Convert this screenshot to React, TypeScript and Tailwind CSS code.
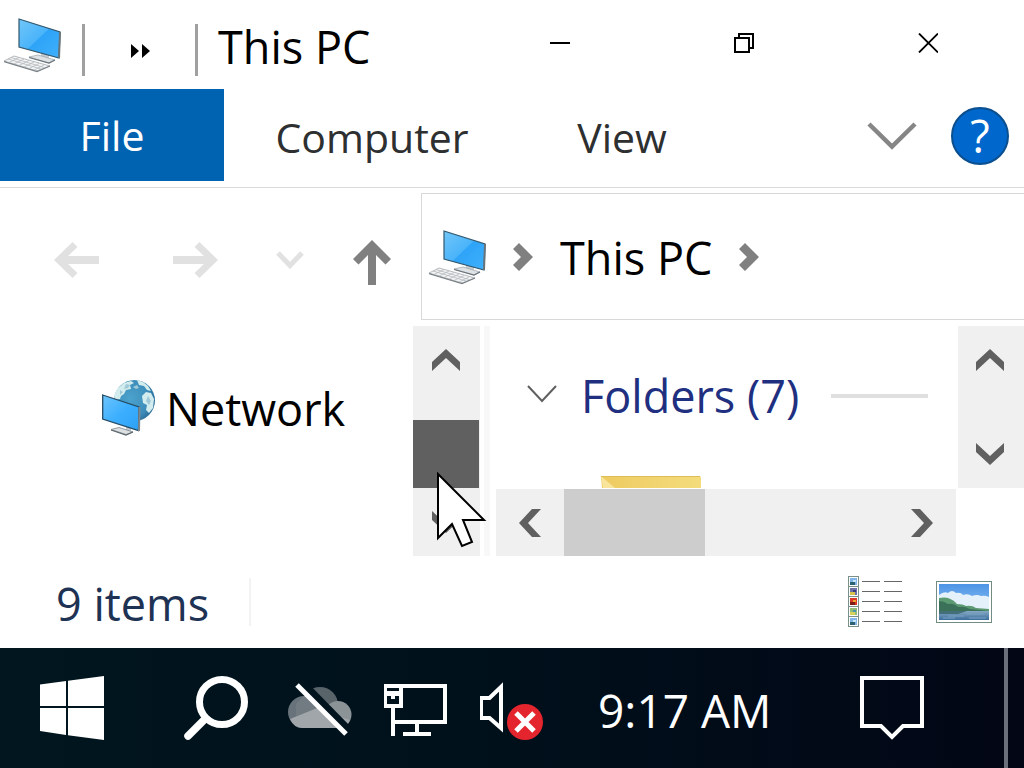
import React from "react";

type Direction = "up" | "down" | "left" | "right";

const chevronPoints: Record<Direction, string> = {
  up: "0,13 14,0 28,13 28,22 14,9 0,22",
  down: "0,0 14,13 28,0 28,9 14,22 0,9",
  left: "13,0 22,0 9,14 22,28 13,28 0,14",
  right: "0,0 9,0 22,14 9,28 0,28 13,14",
};

function ScrollChevron({ direction }: { direction: Direction }) {
  const vertical = direction === "up" || direction === "down";
  const w = vertical ? 28 : 22;
  const h = vertical ? 22 : 28;
  return (
    <svg width={w} height={h} viewBox={`0 0 ${w} ${h}`} fill="#606060" aria-hidden="true">
      <polygon points={chevronPoints[direction]} />
    </svg>
  );
}

function ScrollButton({ direction, label }: { direction: Direction; label: string }) {
  const vertical = direction === "up" || direction === "down";
  return (
    <button
      type="button"
      aria-label={label}
      className={
        vertical
          ? "flex h-[68px] w-full shrink-0 items-center justify-center pr-0.5"
          : "flex h-full w-[68px] shrink-0 items-center justify-center"
      }
    >
      <ScrollChevron direction={direction} />
    </button>
  );
}

function ComputerIcon() {
  return (
    <svg width="58" height="56" viewBox="0 0 58 56" className="shrink-0" aria-hidden="true">
      <defs>
        <linearGradient id="pcScreen" x1="0" y1="0" x2="1" y2="1">
          <stop offset="0" stopColor="#72c6f8" />
          <stop offset="0.48" stopColor="#4ab4fa" />
          <stop offset="0.5" stopColor="#2ea4f8" />
          <stop offset="1" stopColor="#3fb0fb" />
        </linearGradient>
      </defs>
      <polygon points="0,44 10,39 46,49 33,54" fill="#f3f4f5" stroke="#a5abaf" strokeWidth="0.8" />
      <path d="M0 44.500l33 10 13-5.500" fill="none" stroke="#7b8287" strokeWidth="1.200" />
      <path
        d="M4 42l33 10M7 40.500l33 10M5 45.500l10-5M10 47l10-5M15 48.500l10-5M20 50l10-5M25 51.500l10-5M30 53l10-5"
        stroke="#b4b9bd"
        strokeWidth="0.8"
      />
      <polygon points="37,34 45,36 45,42 37,41" fill="#c5cbcf" />
      <polygon points="25,40 34,38 51,43 45,46" fill="#dfe3e5" stroke="#a3aaaf" strokeWidth="0.8" />
      <path d="M25 40.500l20 5.500 6-3" fill="none" stroke="#6b757c" strokeWidth="1.200" />
      <polygon points="15,2 56,15 55,41 15,30" fill="url(#pcScreen)" stroke="#31586f" strokeWidth="1.200" />
      <path d="M56 15l-1 26" stroke="#68747b" strokeWidth="2" />
    </svg>
  );
}

function NetworkIcon() {
  return (
    <svg width="54" height="57" viewBox="0 0 54 57" className="shrink-0" aria-hidden="true">
      <defs>
        <radialGradient id="globe" cx="0.4" cy="0.45" r="0.65">
          <stop offset="0" stopColor="#4ba3cc" />
          <stop offset="0.7" stopColor="#3d8dbb" />
          <stop offset="1" stopColor="#27678f" />
        </radialGradient>
        <linearGradient id="netScreen" x1="0" y1="0" x2="1" y2="1">
          <stop offset="0" stopColor="#6cc5fb" />
          <stop offset="0.5" stopColor="#3dafff" />
          <stop offset="1" stopColor="#2ba1f5" />
        </linearGradient>
      </defs>
      <circle cx="32.500" cy="21.500" r="20.500" fill="url(#globe)" />
      <path
        d="M15 10l7-6 7-2 3 2-4 2 1 4-5 1-2 4-3 2-1 3-5 1-1-4zM35 1l6 2 5 4 3 5-4-1-3-4-5-1zM44 13l5 1 3 6-1 9-4 5-3-3 1-5-4-2-1-7z"
        fill="#d3eced"
      />
      <path d="M24 5l4 1-2 3-4 1zM31 8l4-2 2 3-3 1zM46 17l3 5-2 4-3-4zM18 11l3 2-3 3z" fill="#9fc8d9" />
      <polygon points="24,46 29,48 29,54 24,53" fill="#c3c9cc" />
      <polygon points="9,50.500 17,48.500 31,53 24,55.500" fill="#dde0e2" stroke="#7e878c" strokeWidth="0.8" />
      <path d="M9 51l15 5 7-3" fill="none" stroke="#5d676d" strokeWidth="1.200" />
      <polygon points="0.700,16 37,28 36.500,51.500 0.700,40" fill="url(#netScreen)" stroke="#244b64" strokeWidth="1.300" />
      <path d="M37.500 28l-0.500 24" stroke="#7d878d" strokeWidth="2" />
    </svg>
  );
}

function BreadcrumbArrow() {
  return (
    <svg width="20" height="28" viewBox="0 0 20 28" fill="#808080" className="shrink-0" aria-hidden="true">
      <polygon points="0,6 6,0 20,14 6,28 0,22 8,14" />
    </svg>
  );
}

function TitleBar() {
  return (
    <header className="flex h-[89px] shrink-0 items-center justify-between pr-1">
      <div className="flex items-center pl-1">
        <ComputerIcon />
        <div className="ml-5 mt-2.5 h-[52px] w-[3px] bg-[#a0a0a0]" />
        <button type="button" aria-label="Customize toolbar" className="mt-3 flex h-12 w-[110px] items-center justify-center">
          <svg width="19" height="14" viewBox="0 0 19 14" aria-hidden="true">
            <path d="M0 0l8 7-8 7zM11 0l8 7-8 7z" />
          </svg>
        </button>
        <div className="mt-2.5 h-[52px] w-[3px] bg-[#a0a0a0]" />
        <h1 className="ml-5 mt-1 whitespace-nowrap text-[45px] leading-[60px] text-black">This PC</h1>
      </div>
      <div className="flex h-[86px] self-start">
        <button type="button" aria-label="Minimize" className="flex w-[184px] items-center justify-center">
          <svg width="20" height="20" viewBox="0 0 20 20" aria-hidden="true">
            <path d="M0 10h20" stroke="#000" strokeWidth="2" />
          </svg>
        </button>
        <button type="button" aria-label="Restore" className="flex w-[184px] items-center justify-center">
          <svg width="20" height="20" viewBox="0 0 20 20" fill="none" stroke="#000" strokeWidth="2" aria-hidden="true">
            <path d="M1 5h14v14H1zM5 5V1h14v14h-4" />
          </svg>
        </button>
        <button type="button" aria-label="Close" className="flex w-[184px] items-center justify-center">
          <svg width="20" height="20" viewBox="0 0 20 20" aria-hidden="true">
            <path d="M1 0.500l19 19M20 0.500L1 19.500" stroke="#000" strokeWidth="1.800" />
          </svg>
        </button>
      </div>
    </header>
  );
}

function Ribbon() {
  return (
    <nav aria-label="Ribbon" className="flex shrink-0 items-start border-b border-[#d8dadc] pb-1.5 text-[41px] leading-[56px]">
      <button type="button" className="h-[92px] w-56 bg-[#0063b1] text-white">
        File
      </button>
      <button type="button" className="h-[92px] w-[296px] pt-1 text-[#2d2f30]">
        Computer
      </button>
      <button type="button" className="h-[92px] w-[204px] pt-1 text-[#2d2f30]">
        View
      </button>
      <div className="ml-auto flex h-[92px] items-center gap-[34px] pr-[15px] pt-0.5">
        <button type="button" aria-label="Expand the ribbon">
          <svg width="50" height="28" viewBox="0 0 50 28" fill="none" aria-hidden="true">
            <path d="M2 2l23 22.500L48 2" stroke="#868686" strokeWidth="4.500" />
          </svg>
        </button>
        <button
          type="button"
          aria-label="Help"
          className="flex h-[58px] w-[58px] items-center justify-center rounded-full border-2 border-[#0b4f8f] bg-[#0067cc] text-white"
        >
          <span className="text-[45px] leading-[54px]">?</span>
        </button>
      </div>
    </nav>
  );
}

function NavigationRow() {
  return (
    <div className="flex shrink-0 pb-1.5 pt-[5px]">
      <div className="flex w-[421px] shrink-0 items-stretch pl-[18px] pt-1.5">
        <button type="button" aria-label="Back" disabled className="flex w-[118px] items-center justify-center">
          <svg width="46" height="36" viewBox="0 0 46 36" fill="none" stroke="#e1e1e1" aria-hidden="true">
            <path d="M21 2.500L5 18l16 15.500" strokeWidth="7" />
            <path d="M4 18h41" strokeWidth="8" />
          </svg>
        </button>
        <button type="button" aria-label="Forward" disabled className="flex w-[118px] items-center justify-center">
          <svg width="46" height="36" viewBox="0 0 46 36" fill="none" stroke="#e1e1e1" aria-hidden="true">
            <path d="M25 2.500L41 18 25 33.500" strokeWidth="7" />
            <path d="M1 18h41" strokeWidth="8" />
          </svg>
        </button>
        <button type="button" aria-label="Recent locations" disabled className="flex w-[72px] items-center justify-center">
          <svg width="28" height="18" viewBox="0 0 28 18" fill="none" aria-hidden="true">
            <path d="M2 2l12 12.500L26 2" stroke="#e1e1e1" strokeWidth="5" />
          </svg>
        </button>
        <button type="button" aria-label="Up one level" className="flex w-[92px] items-center justify-center pt-1.5">
          <svg width="38" height="45" viewBox="0 0 38 45" fill="#808080" aria-hidden="true">
            <path d="M19 0l19 19-5.500 5.500L23 15v30h-8V15l-9.500 9.500L0 19z" />
          </svg>
        </button>
      </div>
      <div className="flex h-[127px] min-w-0 flex-1 items-center border-y border-l border-[#d9d9d9] pl-[7px]">
        <ComputerIcon />
        <div className="ml-[26px] flex items-center gap-[27px]">
          <BreadcrumbArrow />
          <button type="button" className="mt-0.5 whitespace-nowrap text-[45px] leading-[60px] text-black">
            This PC
          </button>
          <BreadcrumbArrow />
        </div>
      </div>
    </div>
  );
}

function Cursor() {
  return (
    <svg width="50" height="76" viewBox="0 0 50 76" className="pointer-events-none absolute left-6 top-[146px] z-10" aria-hidden="true">
      <path d="M1 2v64l14-14 10 22 10-4-9-22h21z" fill="#fff" stroke="#000" strokeWidth="2" />
    </svg>
  );
}

function NavigationPane() {
  return (
    <aside className="flex w-[480px] shrink-0">
      <div className="flex-1 pl-[102px] pt-[46px]">
        <a href="#network" className="flex items-center gap-2.5 text-[45px] leading-[66px] text-black">
          <NetworkIcon />
          <span className="pt-1">Network</span>
        </a>
      </div>
      <div className="relative flex w-[67px] flex-col items-center bg-[#f0f0f0]">
        <ScrollButton direction="up" label="Scroll navigation up" />
        <div className="mt-auto h-[68px] w-full border-r border-[#f0f0f0] bg-[#606060]" />
        <ScrollButton direction="down" label="Scroll navigation down" />
        <Cursor />
      </div>
    </aside>
  );
}

function ContentPane() {
  return (
    <section className="flex min-w-0 flex-1 flex-col">
      <div className="flex min-h-[162px] flex-1">
        <div className="flex min-w-0 flex-1 flex-col justify-between overflow-hidden pl-[37px]">
          <h2 className="flex items-center pr-[30px] pt-[37px] text-[45px] leading-[66px] text-[#202f80]">
            <button type="button" aria-label="Collapse group" className="mb-1 mr-6 flex h-12 shrink-0 items-center">
              <svg width="30" height="18" viewBox="0 0 30 18" fill="none" aria-hidden="true">
                <path d="M1 1l14 15L29 1" stroke="#606060" strokeWidth="2" />
              </svg>
            </button>
            <span className="shrink-0 whitespace-nowrap">Folders (7)</span>
            <span className="ml-8 h-1 flex-1 bg-[#dfdfdf]" />
          </h2>
          <svg width="100" height="12" viewBox="0 0 100 12" className="ml-[74px] shrink-0" aria-hidden="true">
            <defs>
              <linearGradient id="folderTop">
                <stop offset="0" stopColor="#eecb61" />
                <stop offset="1" stopColor="#f4dc7c" />
              </linearGradient>
            </defs>
            <path d="M0 0h98q2 0 2 2v10H1z" fill="url(#folderTop)" />
            <path d="M0 0l14 12H2z" fill="#f8e49a" />
            <path d="M0 .5h99" stroke="#dfbd56" />
          </svg>
        </div>
        <div className="flex w-[66px] shrink-0 flex-col items-center justify-between bg-[#f0f0f0]">
          <ScrollButton direction="up" label="Scroll up" />
          <ScrollButton direction="down" label="Scroll down" />
        </div>
      </div>
      <div className="ml-1.5 mr-[68px] mt-px flex h-[67px] items-center bg-[#f0f0f0]">
        <ScrollButton direction="left" label="Scroll left" />
        <div className="h-full w-[141px] bg-[#cdcdcd]" />
        <div className="flex-1" />
        <ScrollButton direction="right" label="Scroll right" />
      </div>
    </section>
  );
}

const thumbnailRows = [
  { y: 0, base: "#7fb5e8", a: "#2c6170", b: "#c8e5fa" },
  { y: 10, base: "#6c72a8", a: "#d8c44a", b: "#3b3e7d" },
  { y: 20, base: "#d93a26", a: "#7c1d15", b: "#f0a52c" },
  { y: 30, base: "#8fbd78", a: "#d7d25b", b: "#4a93b0" },
  { y: 40, base: "#7fb5e8", a: "#2c6170", b: "#c8e5fa" },
];

function DetailsIcon() {
  return (
    <svg width="56" height="52" viewBox="0 0 56 52" aria-hidden="true">
      {thumbnailRows.map((row) => (
        <g key={row.y}>
          <rect x="0.5" y={row.y + 0.5} width="10" height="10" fill="#fff" stroke="#7a918b" />
          <rect x="2" y={row.y + 2} width="7" height="7" fill={row.base} />
          <rect x="2" y={row.y + 6} width="5" height="3" fill={row.a} />
          <rect x="5" y={row.y + 4} width="3" height="2" fill={row.b} />
          <path d={`M14 ${row.y + 5.5}h18M36 ${row.y + 5.5}h18`} stroke="#666" />
        </g>
      ))}
    </svg>
  );
}

function LargeIconsIcon() {
  return (
    <svg width="56" height="42" viewBox="0 0 56 42" aria-hidden="true">
      <defs>
        <linearGradient id="sky" x2="0" y2="1">
          <stop offset="0" stopColor="#4d94e6" />
          <stop offset="1" stopColor="#a5d0f5" />
        </linearGradient>
        <linearGradient id="lake" x2="0" y2="1">
          <stop offset="0" stopColor="#86a9c4" />
          <stop offset="1" stopColor="#3c6d9c" />
        </linearGradient>
      </defs>
      <rect x="0.500" y="0.500" width="55" height="41" fill="#fff" stroke="#728b83" />
      <rect x="3" y="3" width="50" height="36" fill="url(#sky)" />
      <path d="M3 14q5-4 9-2 4-4 8 0 5-1 7 2 5-2 9 1 5-2 9 0 4-1 8 1v15H3z" fill="#e4f1fb" />
      <path d="M3 17q6-1 9 0 6 2 9 6 6 0 9 2 6-1 10 2l13 1v3H3z" fill="#5c9a72" />
      <path d="M3 20q5 0 9 3 6-1 10 3 7-1 12 2l19 2v1H3z" fill="#3b7059" />
      <rect x="3" y="30" width="50" height="9" fill="url(#lake)" />
      <path d="M3 30h28l-9 3H3z" fill="#426f78" />
      <path d="M12 35h16M30 33h18M7 37h12M33 37h17" stroke="#7ba3c2" />
    </svg>
  );
}

function StatusBar() {
  return (
    <footer className="flex h-[92px] shrink-0 items-center pl-14 pr-8">
      <p className="w-[195px] whitespace-nowrap border-r-2 border-[#f3f3f3] pt-1 text-[45px] leading-[44px] text-[#1e3254]">9 items</p>
      <div className="ml-auto flex items-center gap-8">
        <button type="button" aria-label="Details view">
          <DetailsIcon />
        </button>
        <button type="button" aria-label="Large icons view">
          <LargeIconsIcon />
        </button>
      </div>
    </footer>
  );
}

function Taskbar() {
  return (
    <div className="flex h-[120px] shrink-0 items-stretch bg-linear-to-r from-[#01161f] via-[#00101b] to-[#020615] text-white">
      <button type="button" aria-label="Start" className="flex w-36 items-center justify-center">
        <svg width="64" height="64" viewBox="0 0 64 64" fill="#fff" aria-hidden="true">
          <path d="M0 8.500L26 5v25H0zM28 4.700L64 0v30H28zM0 32h26v27L0 55zM28 32h36v32l-36-4.700z" />
        </svg>
      </button>
      <button type="button" aria-label="Search" className="flex w-36 items-center justify-center">
        <svg width="64" height="64" viewBox="0 0 64 64" fill="none" stroke="#fff" aria-hidden="true">
          <circle cx="38" cy="26" r="22.500" strokeWidth="7" />
          <path d="M21 43L4 60" strokeWidth="7.500" strokeLinecap="round" />
        </svg>
      </button>
      <div className="flex gap-8">
        <button type="button" aria-label="OneDrive" className="w-16">
          <svg width="64" height="64" viewBox="0 0 64 64" aria-hidden="true">
            <circle cx="16" cy="36" r="16" fill="#68727a" />
            <circle cx="32" cy="29" r="18" fill="#59636a" />
            <path d="M16 20q16-2 26 12L8 48V28z" fill="#727b81" />
            <circle cx="50" cy="38.500" r="13.500" fill="#8b9397" />
            <path d="M2 43L34 30l9 8 19 6q-3 8-11 8H14Q6 52 2 43z" fill="#a0a6aa" />
            <path d="M13 5l48 49" stroke="#01141e" strokeWidth="7" />
            <path d="M9 9l49 49" stroke="#fff" strokeWidth="5" />
          </svg>
        </button>
        <button type="button" aria-label="Network status" className="w-16">
          <svg width="64" height="64" viewBox="1 0 64 64" aria-hidden="true">
            <path d="M2 10h60v36H10M34 46v12M20 58h28M10 32v28" fill="none" stroke="#fff" strokeWidth="4" />
            <path d="M0 8h20v24H0z" fill="#fff" />
            <path d="M4 12h12v3H4zM4 20h4v3h4v-3h4v8H4z" fill="#00121c" />
          </svg>
        </button>
        <button type="button" aria-label="Volume muted" className="w-16">
          <svg width="64" height="64" viewBox="1 0 64 64" fill="none" aria-hidden="true">
            <path d="M2 22h8.500L22 11v41L10.500 42H2z" stroke="#fff" strokeWidth="4" />
            <circle cx="46" cy="46" r="18" fill="#e5252d" />
            <path d="M37 37l18 18M55 37L37 55" stroke="#fff" strokeWidth="5" />
          </svg>
        </button>
      </div>
      <button type="button" className="ml-[54px] whitespace-nowrap pt-1 text-[46px] leading-[60px]">
        9:17 AM
      </button>
      <button type="button" aria-label="Notifications" className="ml-auto mr-10 flex w-36 items-center justify-center">
        <svg width="64" height="64" viewBox="0 0 64 64" fill="none" stroke="#fff" strokeWidth="4" aria-hidden="true">
          <path d="M2 2h60v48H43L32 61 21 50H2z" />
        </svg>
      </button>
      <button type="button" aria-label="Show desktop" className="w-5 border-l-4 border-[#6b6f7b]" />
    </div>
  );
}

export default function App() {
  return (
    <div className="flex min-h-screen flex-col overflow-hidden bg-white font-['Open_Sans','Noto_Sans',sans-serif]">
      <TitleBar />
      <Ribbon />
      <NavigationRow />
      <main className="flex min-h-[230px] flex-1">
        <NavigationPane />
        <div className="ml-1 w-1.5 shrink-0 bg-[#f8f8f8]" />
        <ContentPane />
      </main>
      <StatusBar />
      <Taskbar />
    </div>
  );
}
